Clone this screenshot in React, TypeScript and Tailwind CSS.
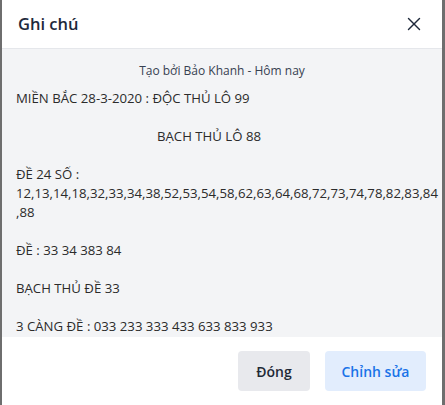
import { X } from "lucide-react";

const FONT = { fontFamily: '"Open Sans", "Noto Sans", sans-serif' };

export default function App() {
  return (
    <div
      className="h-[405px] w-[445px] overflow-hidden bg-[#6e6e6e] pl-[2px]"
      style={FONT}
    >
      <div className="flex h-full w-[440px] flex-col bg-white">
        {/* header */}
        <div className="flex h-[49px] shrink-0 items-center justify-between border-b border-[#e5e7eb] pl-[16px] pr-[17px]">
          <h2 className="text-[16.5px] font-semibold text-[#1e293b]">Ghi chú</h2>
          <button type="button" className="text-[#1e293b]">
            <X size={22} strokeWidth={1.5} />
          </button>
        </div>

        {/* body */}
        <div className="h-[288px] shrink-0 overflow-hidden bg-[#f3f4f6] px-[14px] pt-[13px]">
          <p className="mb-[9px] text-center text-[12px] leading-[18px] text-[#374151]">
            Tạo bởi Bảo Khanh - Hôm nay
          </p>

          <div className="whitespace-nowrap text-[13.2px] leading-[19px] text-[#2b2b2b]">
            <p>MIỀN BẮC 28-3-2020 : ĐỘC THỦ LÔ 99</p>
            <p>&nbsp;</p>
            <p className="pl-[141px]">BẠCH THỦ LÔ 88</p>
            <p>&nbsp;</p>
            <p>ĐỀ 24 SỐ :</p>
            <p>12,13,14,18,32,33,34,38,52,53,54,58,62,63,64,68,72,73,74,78,82,83,84</p>
            <p>,88</p>
            <p>&nbsp;</p>
            <p>ĐỀ : 33 34 383 84</p>
            <p>&nbsp;</p>
            <p>BẠCH THỦ ĐỀ 33</p>
            <p>&nbsp;</p>
            <p>3 CÀNG ĐỀ : 033 233 333 433 633 833 933</p>
          </div>
        </div>

        {/* footer */}
        <div className="flex flex-1 justify-end gap-[15px] bg-white pr-[16px] pt-[14px]">
          <button
            type="button"
            className="h-[40px] w-[72px] rounded-[4px] bg-[#e8e9ed] text-[14px] font-semibold text-[#1f2937]"
          >
            Đóng
          </button>
          <button
            type="button"
            className="h-[40px] w-[101px] rounded-[4px] bg-[#e2edfd] text-[14px] font-semibold text-[#1a73e8]"
          >
            Chỉnh sửa
          </button>
        </div>
      </div>
    </div>
  );
}
